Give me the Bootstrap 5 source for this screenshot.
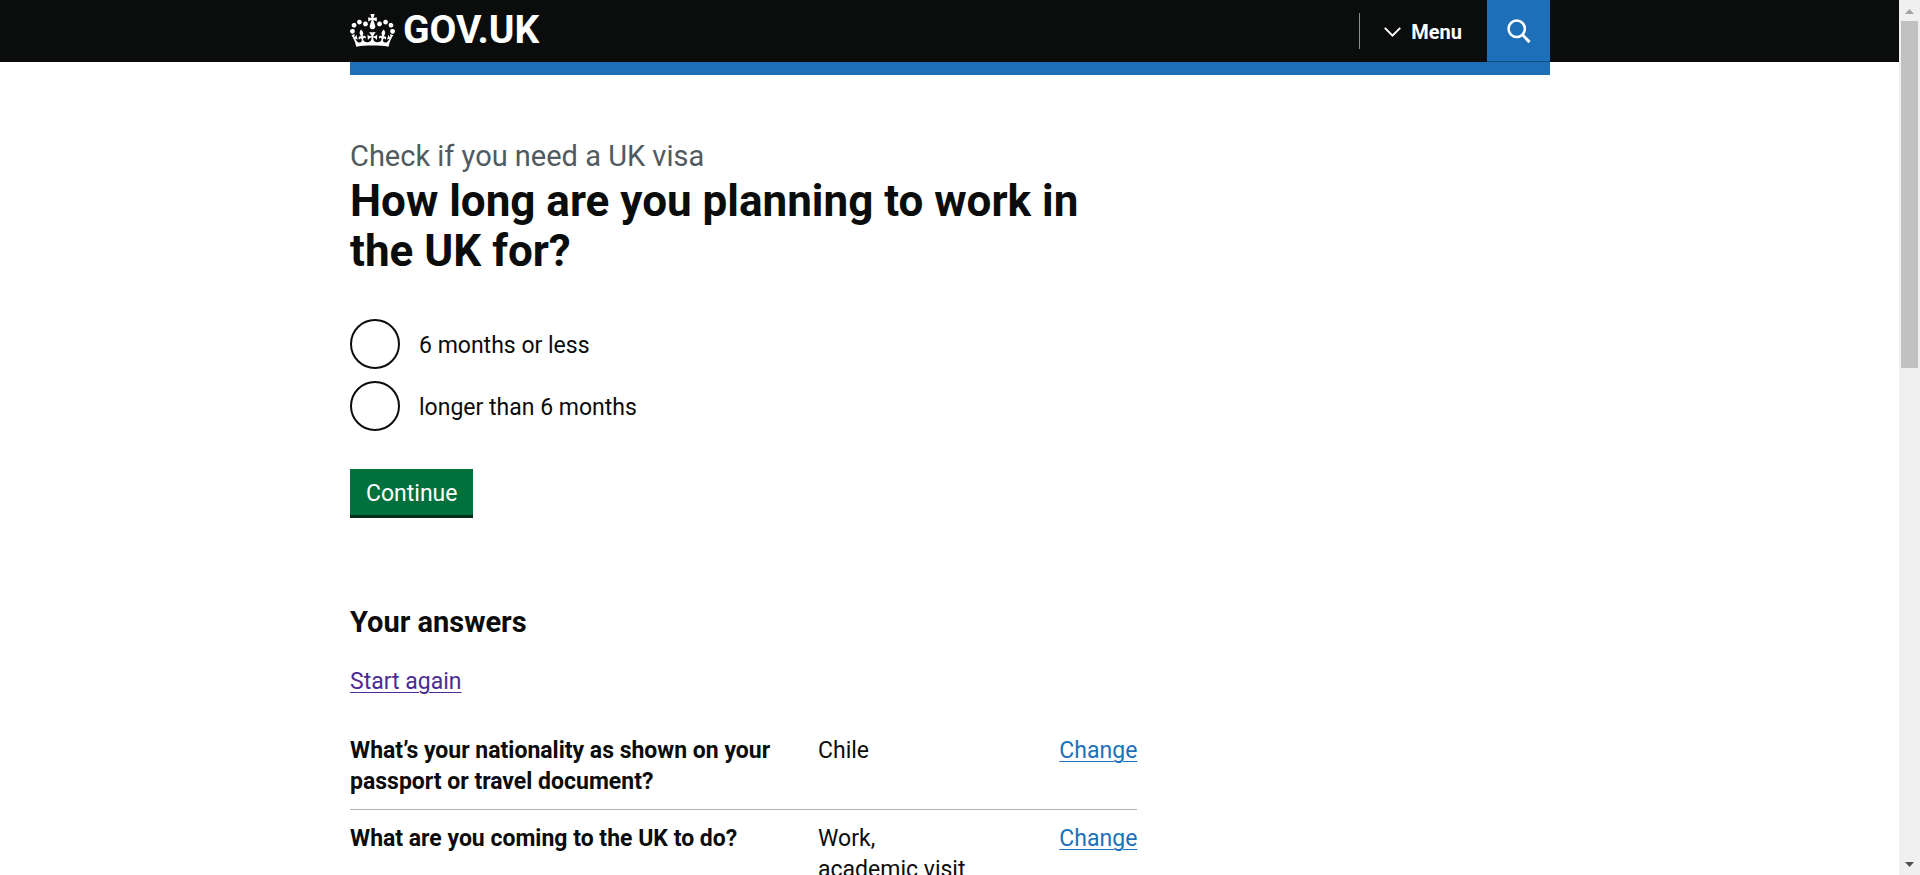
<!DOCTYPE html>
<html lang="en">
<head>
<meta charset="utf-8">
<meta name="viewport" content="width=device-width, initial-scale=1">
<title>How long are you planning to work in the UK for? - Check if you need a UK visa - GOV.UK</title>
<link href="https://cdn.jsdelivr.net/npm/bootstrap@5.3.0/dist/css/bootstrap.min.css" rel="stylesheet">
<style>
  body { font: 400 23px/31px Roboto, "Liberation Sans", sans-serif; color: #0b0c0c; background: #fff; }
  a { color: #1d70b8; text-decoration-thickness: 1px; text-underline-offset: 3px; }
  .link-seen { color: #4c2c92; }
  .wrap { max-width: 1200px; }

  .site-header { background: #0b0c0c; height: 62px; }
  .site-logo { font-size: 39px; line-height: 60px; gap: 8px; }
  .menu-toggle { font-size: 20px; line-height: 24px; height: 36px; margin-top: 13px; padding: 1px 25px 0 24px; gap: 10px; border-left: 1px solid #8b8d8f !important; }
  .search-toggle { width: 63px; height: 62px; padding: 2px 0 0; background: #1d70b8; border-bottom: 1px solid #144e81 !important; }
  .header-strip { height: 13px; background: #1d70b8; }

  .page-body { padding-top: 62px; }
  .page-body > .row { --bs-gutter-x: 38px; }
  .caption-l { font-size: 29px; line-height: 39px; color: #505a5f; }
  .title-l { font-size: 44px; line-height: 50px; margin-bottom: 43px; }
  .title-m { font-size: 29px; line-height: 39px; margin: 88px 0 24px; }

  .choices { gap: 12px; margin-bottom: 38px; }
  .choice { gap: 19px; }
  .choice label { padding-top: 2px; }
  .choice .form-check-input { width: 50px; height: 50px; border: 2px solid #0b0c0c; }
  .btn-go { font-size: 23px; line-height: 24px; padding: 13px 16px 9px; background: #00703c; box-shadow: 0 3px 0 #002d18; }
  .btn-go:hover { background: #005a30; }

  .answers { margin-top: 25px; }
  .answer { padding: 13px 0 12px; border-bottom: 1px solid #b1b4b6; }
  .answer-key { flex: 0 0 468px; padding-right: 25px; }

  .scroll-track { width: 21px; margin-left: -1px; background: #f0f0f0; padding: 9px 2px 8px; }
  .scroll-thumb { width: 17px; flex: 0 0 40.5%; margin: 7px 0 auto; background: #c1c1c1; }
</style>
</head>
<body class="d-flex vh-100 overflow-hidden">
<div class="flex-grow-1 overflow-hidden">
  <header class="site-header">
    <div class="wrap mx-auto d-flex justify-content-between align-items-start">
      <a href="#" class="site-logo d-flex align-items-center text-white text-decoration-none fw-bold">
        <svg width="45" height="33" viewBox="0 0 132 97" fill="currentColor" aria-hidden="true"><path d="M25 30.2c3.5 1.5 7.7-.2 9.1-3.7 1.5-3.6-.2-7.8-3.9-9.2-3.6-1.4-7.6.3-9.1 3.9-1.4 3.5.3 7.5 3.9 9zM9 39.5c3.6 1.5 7.8-.2 9.2-3.7 1.5-3.6-.2-7.8-3.9-9.1-3.6-1.5-7.6.2-9.1 3.8-1.4 3.5.3 7.5 3.8 9zM4.4 57.2c3.5 1.5 7.7-.2 9.1-3.8 1.5-3.6-.2-7.7-3.9-9.1-3.5-1.5-7.6.3-9.1 3.8-1.4 3.5.3 7.6 3.9 9.1zm38.3-21.4c3.5 1.5 7.7-.2 9.1-3.8 1.5-3.6-.2-7.7-3.9-9.1-3.6-1.5-7.6.3-9.1 3.8-1.3 3.6.4 7.7 3.9 9.1zm64.4-5.6c-3.6 1.5-7.8-.2-9.1-3.7-1.5-3.6.2-7.8 3.8-9.2 3.6-1.4 7.7.3 9.2 3.9 1.3 3.5-.4 7.5-3.9 9zm15.9 9.3c-3.6 1.5-7.7-.2-9.1-3.7-1.5-3.6.2-7.8 3.7-9.1 3.6-1.5 7.7.2 9.2 3.8 1.5 3.5-.3 7.5-3.8 9zm4.7 17.7c-3.6 1.5-7.8-.2-9.2-3.8-1.5-3.6.2-7.7 3.9-9.1 3.6-1.5 7.7.3 9.2 3.8 1.3 3.5-.4 7.6-3.9 9.1zM89.3 35.8c-3.6 1.5-7.8-.2-9.2-3.8-1.4-3.6.2-7.7 3.9-9.1 3.6-1.5 7.7.3 9.2 3.8 1.4 3.6-.3 7.7-3.9 9.1zM69.7 17.7l8.9 4.7V9.3l-8.9 2.8c-.2-.3-.5-.6-.9-.9L72.4 0H59.6l3.5 11.2c-.3.3-.6.5-.9.9l-8.8-2.8v13.1l8.8-4.7c.3.3.6.7.9.9l-5 15.4v.1c-.2.8-.4 1.6-.4 2.4 0 4.1 3.1 7.5 7 8.1h.2c.3 0 .7.1 1 .1.4 0 .7 0 1-.1h.2c4-.6 7.1-4.1 7.1-8.1 0-.8-.1-1.7-.4-2.4V34l-5.1-15.4c.4-.2.7-.6 1-.9zM66 92.8c16.9 0 32.8 1.1 47.1 3.2 4-16.9 8.9-26.7 14-33.5l-9.6-3.4c1 4.9 1.1 7.2 0 10.2-1.5-1.4-3-4.3-4.2-8.7L108.6 76c2.8-2 5-3.2 7.5-3.3-4.4 9.4-10 11.9-13.6 11.2-4.3-.8-6.3-4.6-5.6-7.9 1-4.7 5.7-5.9 8-.5 4.3-8.7-3-11.4-7.6-8.8 7.1-7.2 7.9-13.5 2.1-21.1-8 6.1-8.1 12.3-4.5 20.8-4.7-5.4-12.1-2.5-9.5 6.2 3.4-5.2 7.9-2 7.2 3.1-.6 4.3-6.4 7.8-13.5 7.2-10.3-.9-10.9-8-11.2-13.8 2.5-.5 7.1 1.8 11 7.3L80.2 60c-4.1 4.4-8 5.3-12.3 5.4 1.4-4.4 8-11.6 8-11.6H55.5s6.4 7.2 7.9 11.6c-4.2-.1-8-1-12.3-5.4l1.4 16.4c3.9-5.5 8.5-7.7 10.9-7.3-.3 5.8-.9 12.8-11.1 13.8-7.2.6-12.9-2.9-13.5-7.2-.7-5 3.8-8.3 7.1-3.1 2.7-8.7-4.6-11.6-9.4-6.2 3.7-8.5 3.6-14.7-4.6-20.8-5.8 7.6-5 13.9 2.2 21.1-4.7-2.6-11.9.1-7.7 8.8 2.3-5.5 7.1-4.2 8.1.5.7 3.3-1.3 7.1-5.7 7.9-3.5.7-9-1.8-13.5-11.2 2.5.1 4.7 1.3 7.5 3.3l-4.7-15.4c-1.2 4.4-2.7 7.2-4.3 8.7-1.1-3-.9-5.3 0-10.2l-9.5 3.4c5 6.9 9.9 16.7 14 33.5 14.8-2.1 30.8-3.2 47.7-3.2z"/></svg>
        <span>GOV.UK</span>
      </a>
      <div class="d-flex align-items-start">
        <button type="button" class="menu-toggle d-flex align-items-center bg-transparent border-0 text-white fw-bold">
          <svg width="17" height="10" viewBox="0 0 17 10" fill="none" stroke="currentColor" stroke-width="2" aria-hidden="true"><path d="M.8.9l7.7 7.7L16.2.9"/></svg>
          <span>Menu</span>
        </button>
        <button type="button" class="search-toggle d-flex align-items-center justify-content-center border-0 text-white" aria-label="Search GOV.UK">
          <svg width="24" height="25" viewBox="0 0 24 25" fill="none" stroke="currentColor" aria-hidden="true"><circle cx="9.7" cy="9.8" r="8.2" stroke-width="2.5"/><path d="M15.5 15.8l7 7.3" stroke-width="3"/></svg>
        </button>
      </div>
    </div>
  </header>
  <div class="wrap mx-auto header-strip"></div>

  <main class="wrap mx-auto page-body">
    <div class="row">
      <div class="col-md-8">
        <form onsubmit="return false">
          <span class="caption-l d-block">Check if you need a UK visa</span>
          <h1 class="title-l fw-bold" id="question">How long are you planning to work in the UK for?</h1>
          <div class="choices d-flex flex-column" role="radiogroup" aria-labelledby="question">
            <div class="choice d-flex align-items-center">
              <input class="form-check-input m-0 flex-shrink-0" type="radio" name="response" id="short-stay" value="six_months_or_less">
              <label for="short-stay">6 months or less</label>
            </div>
            <div class="choice d-flex align-items-center">
              <input class="form-check-input m-0 flex-shrink-0" type="radio" name="response" id="long-stay" value="longer_than_six_months">
              <label for="long-stay">longer than 6 months</label>
            </div>
          </div>
          <button type="submit" class="btn-go d-block border-0 rounded-0 text-white">Continue</button>
        </form>

        <h2 class="title-m fw-bold">Your answers</h2>
        <a href="#" class="link-seen">Start again</a>

        <dl class="answers">
          <div class="answer d-flex">
            <dt class="answer-key">What’s your nationality as shown on your passport or travel document?</dt>
            <dd class="flex-grow-1 m-0">Chile</dd>
            <dd class="m-0"><a href="#">Change</a></dd>
          </div>
          <div class="answer d-flex">
            <dt class="answer-key">What are you coming to the UK to do?</dt>
            <dd class="flex-grow-1 m-0">Work,<br>academic visit</dd>
            <dd class="m-0"><a href="#">Change</a></dd>
          </div>
        </dl>
      </div>
    </div>
  </main>
</div>

<div class="scroll-track flex-shrink-0 d-flex flex-column align-items-center position-relative" aria-hidden="true">
  <svg class="flex-shrink-0" width="9" height="5" fill="#a3a3a3"><path d="M4.5 0L9 5H0z"/></svg>
  <div class="scroll-thumb"></div>
  <svg class="flex-shrink-0" width="9" height="5" fill="#505050"><path d="M0 0h9L4.5 5z"/></svg>
</div>
<script src="https://cdn.jsdelivr.net/npm/bootstrap@5.3.0/dist/js/bootstrap.bundle.min.js"></script>
</body>
</html>
